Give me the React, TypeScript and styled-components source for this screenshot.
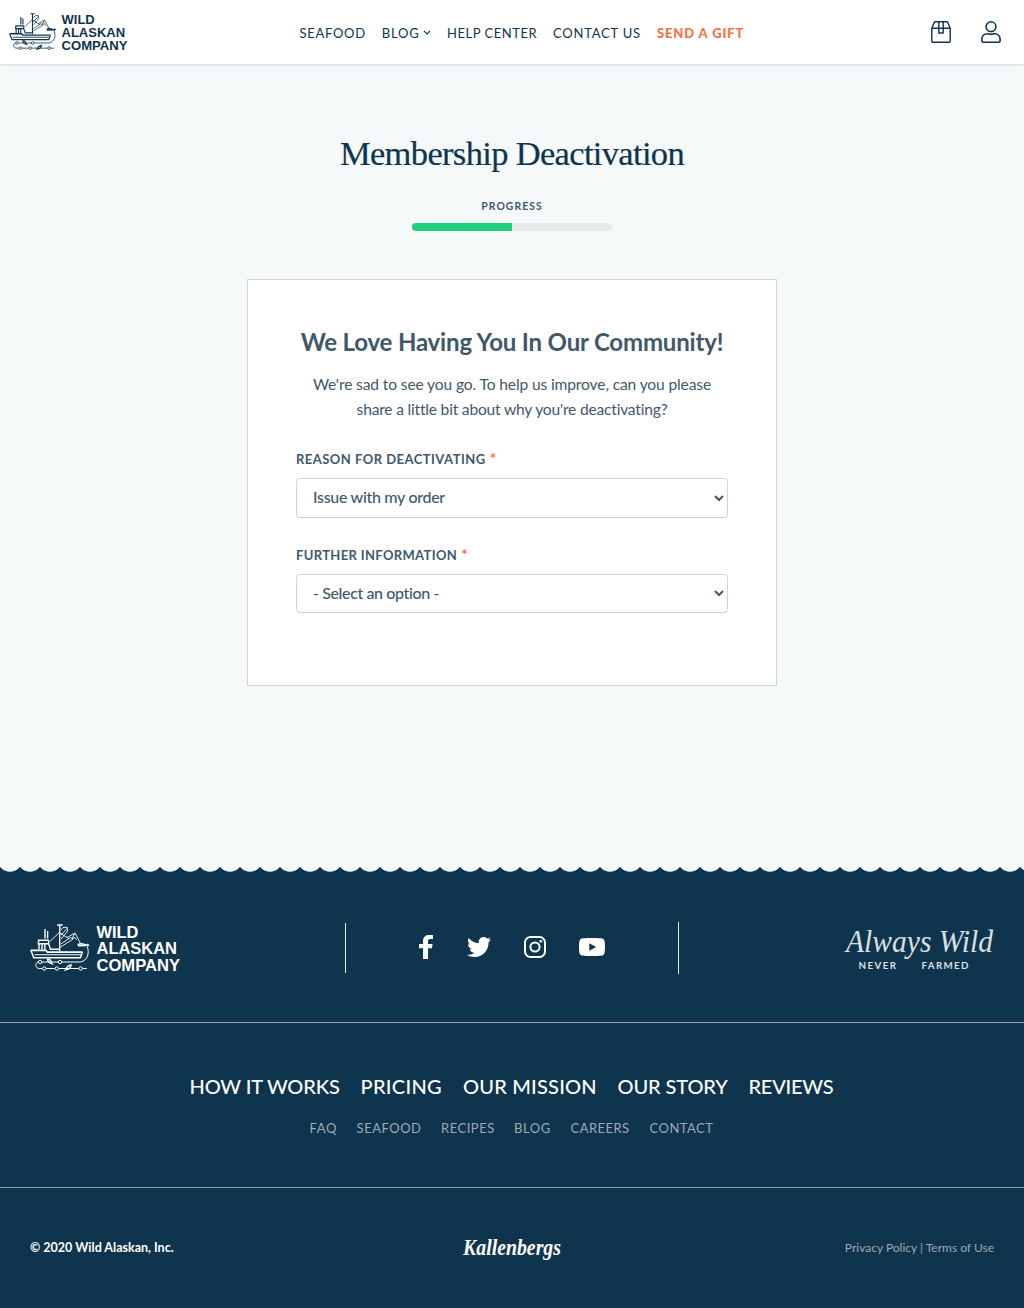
import React from "react";
import styled, { createGlobalStyle } from "styled-components";

const navy = "#0f344d";
const slate = "#3f586a";
const orange = "#f3703f";
const line = "#cdd3d8";
const sans = `Lato, "Open Sans", sans-serif`;

const GlobalStyle = createGlobalStyle`
  * { box-sizing: border-box; }
  body { margin: 0; background: #f5f9fa; font-family: ${sans}; color: ${slate}; }
  h1, h2, p { margin: 0; font-weight: 400; }
  a { color: inherit; text-decoration: none; }
  svg { display: block; overflow: visible; }
`;

const Page = styled.div`
  width: 1024px;
  height: 1308px;
  display: flex;
  flex-direction: column;
  overflow: hidden;
`;

const Header = styled.header`
  height: 64px;
  flex: none;
  display: grid;
  grid-template-columns: 290.5px 1fr auto;
  align-items: center;
  padding: 0 23px 0 9px;
  background: #fff;
  box-shadow: 0 1px 3px rgba(15, 52, 77, 0.16);
`;

const Nav = styled.nav`
  display: flex;
`;

const NavLink = styled.a<{ $width: number; $track: number; $accent?: boolean }>`
  display: flex;
  align-items: center;
  gap: 3px;
  width: ${(p) => p.$width}px;
  padding-top: 2px;
  font-size: 13px;
  line-height: 16px;
  white-space: nowrap;
  letter-spacing: ${(p) => p.$track}px;
  font-weight: ${(p) => (p.$accent ? 900 : 400)};
  color: ${(p) => (p.$accent ? orange : navy)};
`;

const HeaderActions = styled.div`
  display: flex;
  gap: 30px;
`;

const Main = styled.main`
  flex: 1;
  display: flex;
  flex-direction: column;
  align-items: center;
`;

const Title = styled.h1`
  margin-top: 69px;
  font: 400 34.5px/40px "Liberation Serif", serif;
  letter-spacing: -0.66px;
  color: ${navy};
  -webkit-text-stroke: 0.2px ${navy};
`;

const ProgressLabel = styled.div`
  margin-top: 27px;
  font-size: 10.4px;
  font-weight: 700;
  line-height: 12px;
  letter-spacing: 1.05px;
`;

const ProgressTrack = styled.div`
  width: 200px;
  height: 8px;
  margin-top: 11px;
  border-radius: 4px;
  background: #e8eaeb;
  overflow: hidden;
`;

const ProgressFill = styled.div`
  width: 50%;
  height: 100%;
  background: #21d07f;
`;

const Card = styled.section`
  width: 530px;
  height: 407px;
  margin-top: 48px;
  padding: 47px 48px 0;
  border: 1px solid ${line};
  background: #fff;
`;

const CardTitle = styled.h2`
  font-size: 24px;
  font-weight: 700;
  line-height: 30px;
  letter-spacing: -0.18px;
  text-align: center;
  white-space: nowrap;
`;

const Intro = styled.p`
  margin-top: 15px;
  font-size: 15.6px;
  line-height: 25px;
  text-align: center;
`;

const IntroLine = styled.span<{ $track: number }>`
  display: block;
  white-space: nowrap;
  letter-spacing: ${(p) => p.$track}px;
`;

const Field = styled.label`
  display: block;
  margin-top: 27px;
`;

const FieldLabel = styled.span<{ $track: number }>`
  display: block;
  height: 29px;
  font-size: 13px;
  font-weight: 700;
  line-height: 20px;
  letter-spacing: ${(p) => p.$track}px;
`;

const Required = styled.span`
  margin-left: 0.5px;
  font-size: 15px;
  line-height: 0;
  color: ${orange};
`;

const Select = styled.select<{ $height: number; $lift: number; $track: number }>`
  display: block;
  width: 432px;
  height: ${(p) => p.$height}px;
  padding: 0 0 ${(p) => p.$lift}px 12px;
  border: 1px solid ${line};
  border-radius: 4px;
  background: #fff;
  color: ${slate};
  font: 500 16px/20px ${sans};
  letter-spacing: ${(p) => p.$track}px;
`;

const Footer = styled.footer`
  height: 442px;
  flex: none;
  display: flex;
  flex-direction: column;
  background: ${navy};
  color: #fff;
`;

const Waves = styled.div`
  height: 8px;
  flex: none;
  background: radial-gradient(circle at 10px -6.8px, #f5f9fa 12.1px, transparent 12.9px) 0 0 / 20px 8px repeat-x;
`;

const BrandRow = styled.div`
  height: 148px;
  display: flex;
  align-items: center;
  justify-content: space-between;
  padding: 0 30px;
`;

const Social = styled.div`
  width: 334px;
  display: flex;
  align-items: center;
  justify-content: space-between;
`;

const Rule = styled.div<{ $height: number }>`
  width: 1px;
  height: ${(p) => p.$height}px;
  background: #e9edef;
`;

const SocialIcons = styled.div`
  display: flex;
  align-items: center;
  gap: 33px;
  padding-bottom: 2px;

  svg:first-child {
    margin-right: 1px;
  }
`;

const LinksSection = styled.div`
  height: 166px;
  border: solid #93a2ad;
  border-width: 1px 0;
  padding-top: 49px;
`;

const LinkRow = styled.div<{ $indent: number }>`
  display: flex;
  padding-left: ${(p) => p.$indent}px;
`;

const BigLink = styled.a<{ $width: number; $track: number }>`
  width: ${(p) => p.$width}px;
  font-size: 20px;
  font-weight: 500;
  line-height: 28px;
  white-space: nowrap;
  letter-spacing: ${(p) => p.$track}px;
`;

const SmallLink = styled.a<{ $width: number; $track: number }>`
  width: ${(p) => p.$width}px;
  margin-top: 18px;
  font-size: 13px;
  line-height: 20px;
  white-space: nowrap;
  letter-spacing: ${(p) => p.$track}px;
  color: #9caab4;
`;

const Legal = styled.div`
  height: 119px;
  display: grid;
  grid-template-columns: 1fr 100px 1fr;
  align-items: center;
  padding: 0 30px;
  font-size: 12px;
`;

const Copyright = styled.span`
  font-size: 12.5px;
  font-weight: 700;
`;

const Policies = styled.span`
  padding-bottom: 1px;
  text-align: right;
  color: #9caab4;
`;

function Logo({ width, color }: { width: number; color: string }) {
  return (
    <svg width={width} height={(width * 48) / 150} viewBox="0 0 150 48" fill="none" stroke={color} strokeWidth="1">
      <path d="M.8 26.3H16l1.2 1.8H52.5" strokeWidth="1.7" />
      <path d="M.8 26.3l3 7.4H50.5l1.8-5.6" strokeWidth="1.4" />
      <path d="M4.5 30.7H51" strokeWidth="1.1" />
      <path d="M15 5v9.5M17.6 7v7.5" strokeWidth="1.4" />
      <path d="M8.2 16.3H18.6M7.5 19.8H18.6L20.5 25.2H29M8.5 16.3V19.5M18.6 16v4M9 20v5.5M12 20v5.5M14.8 20v5.5" strokeWidth="1.4" />
      <path d="M29.7.6V27M27.2 1H32.6" strokeWidth="1.4" />
      <path d="M20 17.5L29.2 8.5 39.5 15M31 6L33 3.5 37 3.2M31 11l6-6.5M37 3l.6 4-6.4 8M30.5 23L43 15.2 40.6 13.4 30.8 20M37 13.5L45 9l6.6 12.4M44.7 9.3l-2.6 5.5 2.8-1.3 1.8 2.3" strokeWidth=".9" />
      <path d="M47.5 20.6c3-1.5 6-1 9.3.8M48 21.7l8.8-.2M57 20l1.5 1.2-1.5 1" strokeWidth="1.4" />
      <path d="M57.5 23c1.8 6.4.2 13.4-7 15H31.8M28.2 38H12M8.2 38c-3.2.3-3.5 6 1 6.5H12.4M16.2 44.5h8.6M28.7 44.5H48.8M52.6 44.5h4.2" />
      <circle cx="10.1" cy="38" r="1.7" />
      <circle cx="30" cy="38" r="1.7" />
      <circle cx="14.3" cy="44.5" r="1.7" />
      <circle cx="26.8" cy="44.5" r="1.7" />
      <circle cx="50.7" cy="44.5" r="1.7" />
      <path d="M17.5 35.3c2.2-.3 3.8 1.6 4.4 4.2-2.6-.3-4-1.9-4.4-4.2zM21.5 39.5l1.7 1M36 45.7c.4-3 2.4-4.3 5.2-4.7-.7 3-2.6 4.5-5.2 4.7zM36 45.7l-1.5 1" strokeWidth="1.3" />
      <g fill={color} stroke="none" fontFamily="Liberation Sans, Arial, sans-serif" fontWeight="700" fontSize="16.6">
        <text x="66.5" y="13.8" textLength="42" lengthAdjust="spacingAndGlyphs">WILD</text>
        <text x="66.5" y="30.3" textLength="80.5" lengthAdjust="spacingAndGlyphs">ALASKAN</text>
        <text x="66.5" y="46.8" textLength="83.5" lengthAdjust="spacingAndGlyphs">COMPANY</text>
      </g>
    </svg>
  );
}

const ChevronDown = () => (
  <svg width="8" height="6" viewBox="0 0 8 6" fill="none" stroke={navy} strokeWidth="1.1">
    <path d="M1 1l3 3 3-3" />
  </svg>
);

const BoxIcon = () => (
  <svg width="20" height="22" viewBox="0 0 20 22" fill="none" stroke={navy} strokeWidth="1.4" strokeLinejoin="round">
    <path d="M.8 7.3L3.6.8H16.4L19.2 7.3V20.2a1 1 0 0 1-1 1H1.8a1 1 0 0 1-1-1zM.8 7.3H19.2M7.8.8V12H12.2V.8" />
  </svg>
);

const UserIcon = () => (
  <svg width="20" height="22" viewBox="0 0 20 22" fill="none" stroke={navy} strokeWidth="1.6">
    <circle cx="10" cy="5.7" r="4.9" />
    <path d="M6.3 12.7c1.5 0 2 .7 3.7.7s2.2-.7 3.7-.7c3.2 0 5.4 2.4 5.4 5.6v1.2c0 1-.7 1.7-1.7 1.7H2.6c-1 0-1.7-.7-1.7-1.7v-1.2c0-3.2 2.2-5.6 5.4-5.6z" />
  </svg>
);

const FacebookIcon = () => (
  <svg width="14" height="24" viewBox="0 0 264 512" preserveAspectRatio="none" fill="#fff">
    <path d="M76.7 512V283H0v-91h76.7v-71.7C76.7 42.4 124.3 0 193.8 0c33.3 0 61.9 2.5 70.2 3.6V85h-48.2c-37.8 0-45.1 18-45.1 44.3V192H256l-11.7 91h-73.6v229" />
  </svg>
);

const TwitterIcon = () => (
  <svg width="24" height="20" viewBox="0 48 512 416" preserveAspectRatio="none" fill="#fff">
    <path d="M459.37 151.716c.325 4.548.325 9.097.325 13.645 0 138.72-105.583 298.558-298.558 298.558-59.452 0-114.68-17.219-161.137-47.106 8.447.974 16.568 1.299 25.34 1.299 49.055 0 94.213-16.568 130.274-44.832-46.132-.975-84.792-31.188-98.112-72.772 6.498.974 12.995 1.624 19.818 1.624 9.421 0 18.843-1.3 27.614-3.573-48.081-9.747-84.143-51.98-84.143-102.985v-1.299c13.969 7.797 30.214 12.67 47.431 13.319-28.264-18.843-46.781-51.005-46.781-87.391 0-19.492 5.197-37.36 14.294-52.954 51.655 63.675 129.3 105.258 216.365 109.807-1.624-7.797-2.599-15.918-2.599-24.04 0-57.828 46.782-104.934 104.934-104.934 30.213 0 57.502 12.67 76.67 33.137 23.715-4.548 46.456-13.32 66.599-25.34-7.798 24.366-24.366 44.833-46.132 57.827 21.117-2.273 41.584-8.122 60.426-16.243-14.292 20.791-32.161 39.308-52.628 54.253z" />
  </svg>
);

const InstagramIcon = () => (
  <svg width="22" height="22" viewBox="0 0 22 22" fill="none" stroke="#fff" strokeWidth="2">
    <rect x="1" y="1" width="20" height="20" rx="5.5" />
    <circle cx="11" cy="11" r="4.6" />
    <circle cx="16.8" cy="5.2" r="1.3" fill="#fff" stroke="none" />
  </svg>
);

const YoutubeIcon = () => (
  <svg width="26" height="18" viewBox="14.9 64 546.2 384" preserveAspectRatio="none" fill="#fff">
    <path d="M549.655 124.083c-6.281-23.65-24.787-42.276-48.284-48.597C458.781 64 288 64 288 64S117.22 64 74.629 75.486c-23.497 6.322-42.003 24.947-48.284 48.597-11.412 42.867-11.412 132.305-11.412 132.305s0 89.438 11.412 132.305c6.281 23.65 24.787 41.5 48.284 47.821C117.22 448 288 448 288 448s170.78 0 213.371-11.486c23.497-6.321 42.003-24.171 48.284-47.821 11.412-42.867 11.412-132.305 11.412-132.305s0-89.438-11.412-132.305zm-317.51 213.508V175.185l142.739 81.205-142.739 81.201z" />
  </svg>
);

const AlwaysWild = () => (
  <svg width="150" height="46" viewBox="0 0 150 46" fill="#d9e0e4">
    <text x="2" y="27" textLength="147" lengthAdjust="spacingAndGlyphs" fontFamily="Liberation Serif, serif" fontStyle="italic" fontSize="32">
      Always Wild
    </text>
    <g fontFamily="Lato, sans-serif" fontWeight="700" fontSize="9.8">
      <text x="14.5" y="44.2" textLength="37.5" lengthAdjust="spacing">NEVER</text>
      <text x="77.5" y="44.2" textLength="47" lengthAdjust="spacing">FARMED</text>
    </g>
  </svg>
);

const Kallenbergs = () => (
  <svg width="100" height="28" viewBox="0 0 100 28" fill="#fff">
    <text x="1" y="21" textLength="98" lengthAdjust="spacingAndGlyphs" fontFamily="Liberation Serif, serif" fontStyle="italic" fontWeight="700" fontSize="24">
      Kallenbergs
    </text>
  </svg>
);

const navItems = [
  { label: "SEAFOOD", width: 82.3, track: 0.7 },
  { label: "BLOG", width: 65.2, track: 0.8, menu: true },
  { label: "HELP CENTER", width: 106, track: 0.54 },
  { label: "CONTACT US", width: 104, track: 0.78 },
  { label: "SEND A GIFT", width: 90, track: 0.88, accent: true },
];

const bigLinks = [
  { label: "HOW IT WORKS", width: 171, track: -0.15 },
  { label: "PRICING", width: 102.5, track: 0.3 },
  { label: "OUR MISSION", width: 154.5, track: 0.2 },
  { label: "OUR STORY", width: 131, track: -0.12 },
  { label: "REVIEWS", width: 90, track: -0.25 },
];

const smallLinks = [
  { label: "FAQ", width: 47, track: 0.6 },
  { label: "SEAFOOD", width: 84.5, track: 0.5 },
  { label: "RECIPES", width: 73, track: 0.5 },
  { label: "BLOG", width: 56.5, track: 0.5 },
  { label: "CAREERS", width: 79, track: 0.45 },
  { label: "CONTACT", width: 70, track: 0.45 },
];

export default function App() {
  return (
    <Page>
      <GlobalStyle />
      <Header>
        <Logo width={118.5} color={navy} />
        <Nav>
          {navItems.map((item) => (
            <NavLink key={item.label} href="#" $width={item.width} $track={item.track} $accent={item.accent}>
              {item.label}
              {item.menu && <ChevronDown />}
            </NavLink>
          ))}
        </Nav>
        <HeaderActions>
          <BoxIcon />
          <UserIcon />
        </HeaderActions>
      </Header>

      <Main>
        <Title>Membership Deactivation</Title>
        <ProgressLabel>PROGRESS</ProgressLabel>
        <ProgressTrack>
          <ProgressFill />
        </ProgressTrack>
        <Card>
          <CardTitle>We Love Having You In Our Community!</CardTitle>
          <Intro>
            <IntroLine $track={-0.13}>We're sad to see you go. To help us improve, can you please</IntroLine>
            <IntroLine $track={-0.2}>share a little bit about why you're deactivating?</IntroLine>
          </Intro>
          <Field>
            <FieldLabel $track={0.47}>
              REASON FOR DEACTIVATING <Required>*</Required>
            </FieldLabel>
            <Select $height={40} $lift={3} $track={-0.3} defaultValue="order">
              <option value="order">Issue with my order</option>
            </Select>
          </Field>
          <Field>
            <FieldLabel $track={0.35}>
              FURTHER INFORMATION <Required>*</Required>
            </FieldLabel>
            <Select $height={39} $lift={2} $track={-0.38} defaultValue="">
              <option value="">- Select an option -</option>
            </Select>
          </Field>
        </Card>
      </Main>

      <Footer>
        <Waves />
        <BrandRow>
          <Logo width={150} color="#fff" />
          <Social>
            <Rule $height={50} />
            <SocialIcons>
              <FacebookIcon />
              <TwitterIcon />
              <InstagramIcon />
              <YoutubeIcon />
            </SocialIcons>
            <Rule $height={52} />
          </Social>
          <AlwaysWild />
        </BrandRow>
        <LinksSection>
          <LinkRow $indent={189.5}>
            {bigLinks.map((l) => (
              <BigLink key={l.label} href="#" $width={l.width} $track={l.track}>
                {l.label}
              </BigLink>
            ))}
          </LinkRow>
          <LinkRow $indent={309.6}>
            {smallLinks.map((l) => (
              <SmallLink key={l.label} href="#" $width={l.width} $track={l.track}>
                {l.label}
              </SmallLink>
            ))}
          </LinkRow>
        </LinksSection>
        <Legal>
          <Copyright>© 2020 Wild Alaskan, Inc.</Copyright>
          <Kallenbergs />
          <Policies>Privacy Policy | Terms of Use</Policies>
        </Legal>
      </Footer>
    </Page>
  );
}
